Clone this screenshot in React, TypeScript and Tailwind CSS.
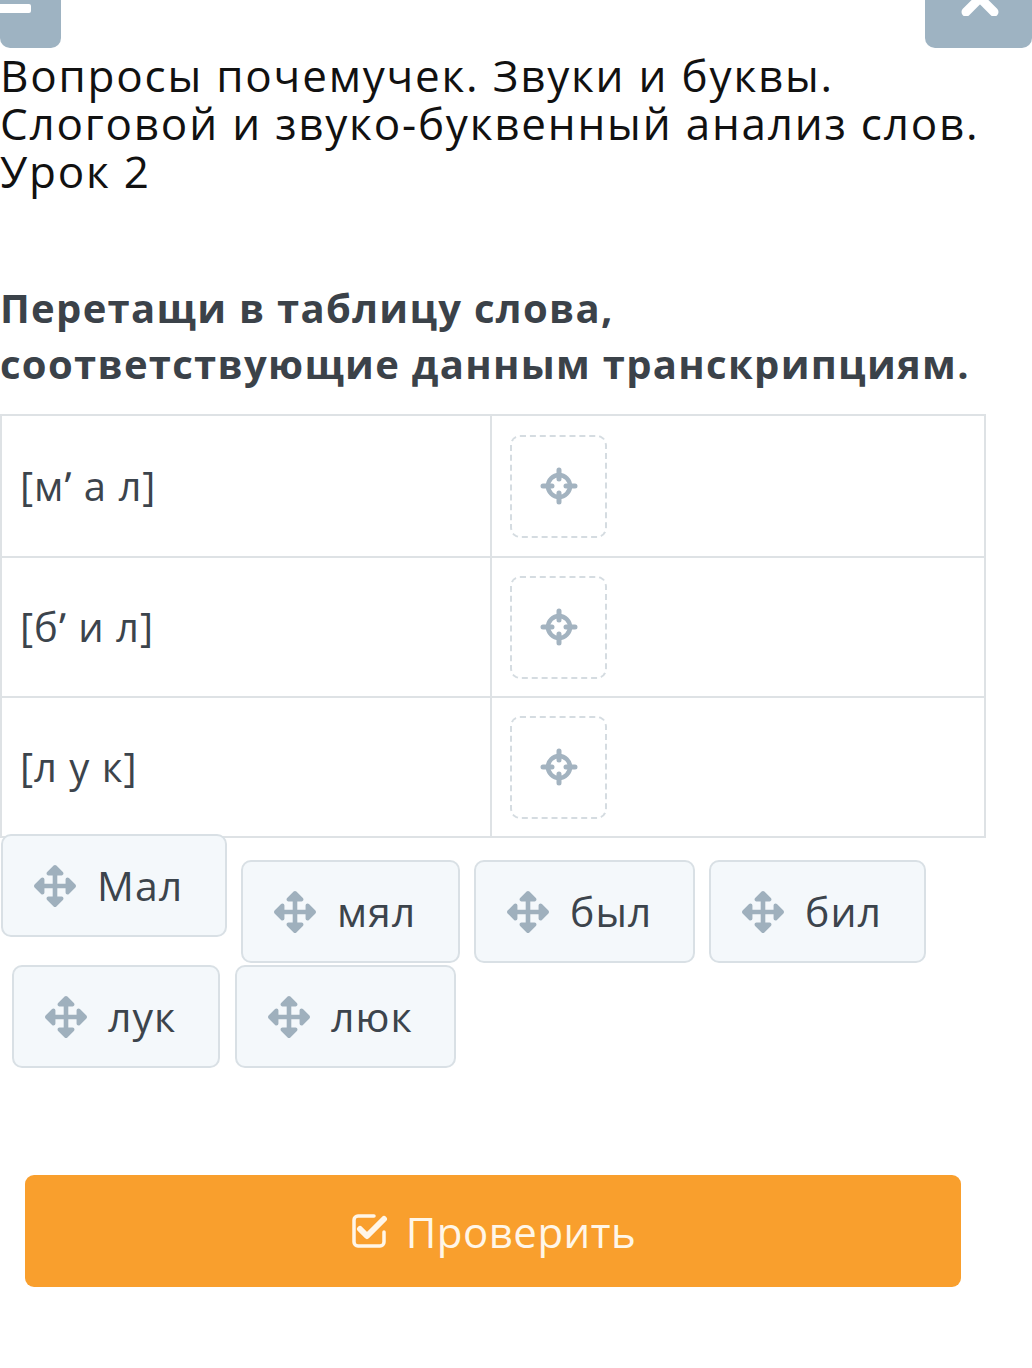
import { FaArrowsAlt } from "react-icons/fa";

const ROWS = ["[м\u02B9 а л]", "[б\u02B9 и л]", "[л у к]"];

function Crosshair() {
  return (
    <svg width="38" height="38" viewBox="0 0 38 38" fill="none" stroke="#a3b3c0" strokeLinecap="round">
      <circle cx="19" cy="19" r="11" strokeWidth="4.5" />
      <path d="M19 3v9M19 26v9M3 19h9M26 19h9" strokeWidth="5" />
    </svg>
  );
}

function CheckSquare() {
  return (
    <svg width="38" height="38" viewBox="0 0 38 38" fill="none" stroke="#fff6e8" strokeLinecap="round" strokeLinejoin="round">
      <path d="M24 4H8a4 4 0 0 0-4 4v22a4 4 0 0 0 4 4h22a4 4 0 0 0 4-4V20" strokeWidth="3.5" />
      <path d="M10 17l7 7L34 7" strokeWidth="6" />
    </svg>
  );
}

function Chip({ word, className }: { word: string; className: string }) {
  return (
    <div
      className={`flex h-[103px] items-center gap-[21px] rounded-[10px] border-2 border-[#d9e0e5] bg-[#f4f8fb] pl-[31px] text-[41px] tracking-[1px] text-[#3c444c] ${className}`}
    >
      <FaArrowsAlt className="h-[42px] w-[42px] shrink-0 text-[#9fb0bd]" />
      <span>{word}</span>
    </div>
  );
}

export default function App() {
  return (
    <div className="relative min-h-[1368px] w-[1032px] bg-white" style={{ fontFamily: '"Open Sans", "Noto Sans", sans-serif' }}>
      {/* cropped toolbar buttons */}
      <div className="flex h-[48px] justify-between">
        <div className="relative h-[48px] w-[61px] rounded-b-[10px] bg-[#9eb3c2]">
          <div className="absolute left-0 top-[4px] h-[9px] w-[31px] rounded-r-[2px] bg-white" />
        </div>
        <div className="relative h-[48px] w-[107px] overflow-hidden rounded-b-[10px] bg-[#9eb3c2]">
          <svg className="absolute left-[33px] top-[-20px]" width="44" height="36" viewBox="0 0 44 36">
            <path d="M8 4l28 28M36 4L8 32" stroke="white" strokeWidth="9" strokeLinecap="round" />
          </svg>
        </div>
      </div>

      <h1 className="mt-[3px] text-[44px] leading-[48px] font-normal tracking-[1.8px] text-[#111]">
        Вопросы почемучек. Звуки и буквы.
        <br />
        Слоговой и звуко-буквенный анализ слов.
        <br />
        Урок 2
      </h1>

      <h2 className="mt-[85px] text-[40px] font-bold leading-[56px] tracking-[1.3px] text-[#3b4249]">
        Перетащи в таблицу слова,
        <br />
        соответствующие данным транскрипциям.
      </h2>

      <div className="mt-[22px] w-[986px] border-2 border-[#dee2e5]">
        {ROWS.map((r, i) => (
          <div key={r} className={`grid h-[140px] grid-cols-[490px_1fr] ${i > 0 ? "border-t-2 border-[#dee2e5]" : ""}`}>
            <div className="flex items-center border-r-2 border-[#dee2e5] pl-[18px] text-[40px] tracking-[1px] text-[#3c444c]">{r}</div>
            <div className="flex items-center pl-[18px]">
              <div className="flex h-[103px] w-[97px] items-center justify-center rounded-[10px] border-2 border-dashed border-[#d5dce1]">
                <Crosshair />
              </div>
            </div>
          </div>
        ))}
      </div>

      <div className="flex flex-wrap gap-x-[14px] gap-y-[2px] pl-[12px] pt-[22px]">
        <Chip word="Мал" className="relative -top-[26px] ml-[-11px] w-[226px]" />
        <Chip word="мял" className="w-[219px]" />
        <Chip word="был" className="w-[221px]" />
        <Chip word="бил" className="w-[217px]" />
        <Chip word="лук" className="w-[208px]" />
        <Chip word="люк" className="ml-[1px] w-[221px]" />
      </div>

      <div className="mt-[107px] flex px-[25px]">
        <button className="flex h-[112px] w-[936px] items-center justify-center gap-[18px] rounded-[9px] bg-[#f99f2d] text-[42px] tracking-[0.5px] text-[#fff6e8]">
          <CheckSquare />
          <span>Проверить</span>
        </button>
      </div>
    </div>
  );
}
